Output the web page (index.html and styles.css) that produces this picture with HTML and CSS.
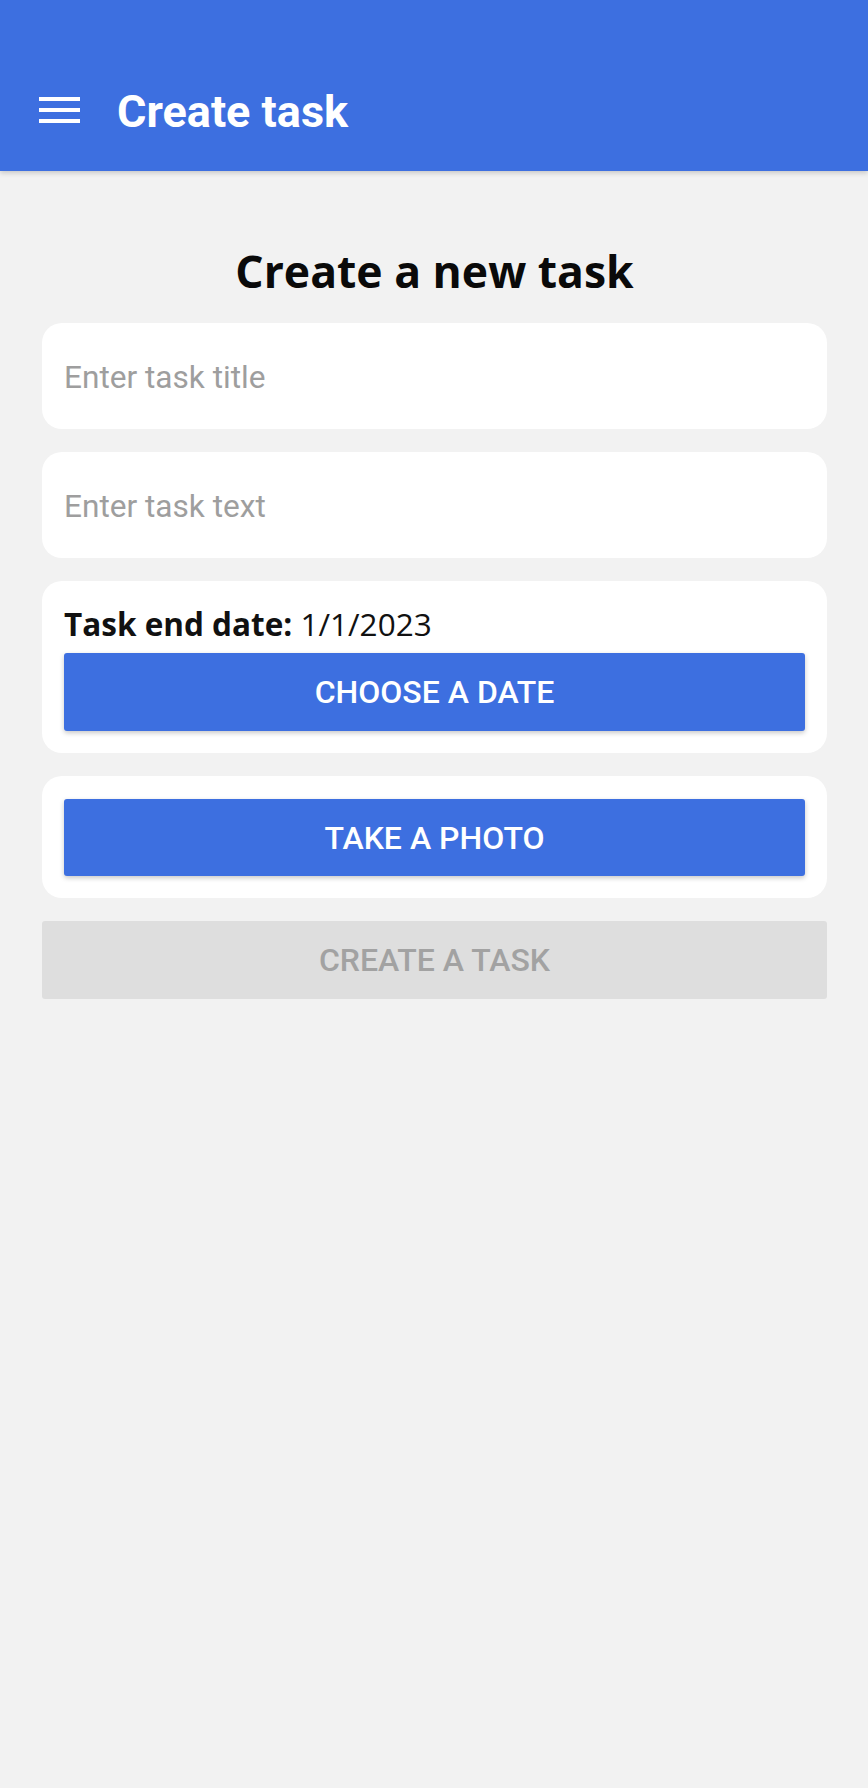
FILE: index.html
```html
<!DOCTYPE html>
<html lang="en">
<head>
<meta charset="utf-8">
<title>Create task</title>
<link rel="stylesheet" href="styles.css">
</head>
<body>
<header class="appbar">
  <div class="toolbar">
    <span class="menu" aria-label="Menu">
      <span class="menu-line"></span>
      <span class="menu-line"></span>
      <span class="menu-line"></span>
    </span>
    <h1 class="appbar-title">Create task</h1>
  </div>
</header>
<main class="content">
  <h2 class="page-title">Create a new task</h2>
  <div class="form">
    <div class="card input-card">
      <input class="field" type="text" placeholder="Enter task title">
    </div>
    <div class="card input-card">
      <input class="field" type="text" placeholder="Enter task text">
    </div>
    <div class="card date-card">
      <p class="date-line"><b>Task end date:</b> 1/1/2023</p>
      <button class="btn btn-primary" type="button">Choose a date</button>
    </div>
    <div class="card photo-card">
      <button class="btn btn-primary" type="button">Take a photo</button>
    </div>
    <button class="btn btn-disabled" type="button" disabled>Create a task</button>
  </div>
</main>
</body>
</html>
```

FILE: styles.css
```css
html, body {
  margin: 0;
  padding: 0;
}
body {
  background: #f2f2f2;
  min-height: 1788px;
  font-family: "Roboto", "Liberation Sans", sans-serif;
}
.appbar {
  height: 171px;
  box-sizing: border-box;
  padding-top: 48px;
  background: #3d6fe0;
  box-shadow: 0 2px 5px rgba(0, 0, 0, 0.18);
  position: relative;
}
.toolbar {
  height: 123px;
  display: flex;
  align-items: center;
  padding-left: 39px;
}
.menu {
  width: 41px;
  height: 26px;
  display: flex;
  flex-direction: column;
  justify-content: space-between;
  margin-right: 37px;
}
.menu-line {
  display: block;
  height: 4px;
  background: #ffffff;
}
.appbar-title {
  margin: 0;
  margin-top: 4px;
  color: #ffffff;
  font-family: "Roboto", "Liberation Sans", sans-serif;
  font-weight: 700;
  font-size: 45px;
  line-height: 1;
}
.content {
  padding: 70px 41px 0 42px;
}
.page-title {
  margin: 0 0 22px;
  text-align: center;
  font-family: "Open Sans", "Noto Sans", sans-serif;
  font-weight: 700;
  font-size: 44.5px;
  line-height: 60px;
  color: #0a0a0a;
}
.form {
  display: flex;
  flex-direction: column;
  gap: 23px;
}
.card {
  background: #ffffff;
  border-radius: 20px;
  box-sizing: border-box;
}
.input-card {
  height: 106px;
  display: flex;
  align-items: center;
  padding: 0 22px;
}
.field {
  width: 100%;
  border: 0;
  outline: none;
  background: transparent;
  padding: 0;
  margin: 0;
  margin-top: 2px;
  font-family: "Roboto", "Liberation Sans", sans-serif;
  font-size: 31.6px;
  color: #222;
}
.field::placeholder {
  color: #9e9e9e;
}
.date-card {
  padding: 22px 22px 22px;
}
.date-line {
  margin: 0 0 8px;
  font-family: "Open Sans", "Noto Sans", sans-serif;
  font-size: 31.5px;
  line-height: 42px;
  color: #111;
}
.date-line b {
  font-weight: 700;
}
.photo-card {
  padding: 23px 22px 22px;
}
.btn {
  display: block;
  width: 100%;
  height: 78px;
  border: 0;
  border-radius: 3px;
  font-family: "Roboto", "Liberation Sans", sans-serif;
  font-weight: 500;
  font-size: 32px;
  text-transform: uppercase;
  padding: 0;
  margin: 0;
}
.btn-primary {
  background: #3d6fe0;
  color: #ffffff;
  box-shadow: 0 2px 5px rgba(0, 0, 0, 0.22);
}
.photo-card .btn {
  height: 77px;
}
.btn-disabled {
  background: #dedede;
  color: #a2a2a2;
}
```
